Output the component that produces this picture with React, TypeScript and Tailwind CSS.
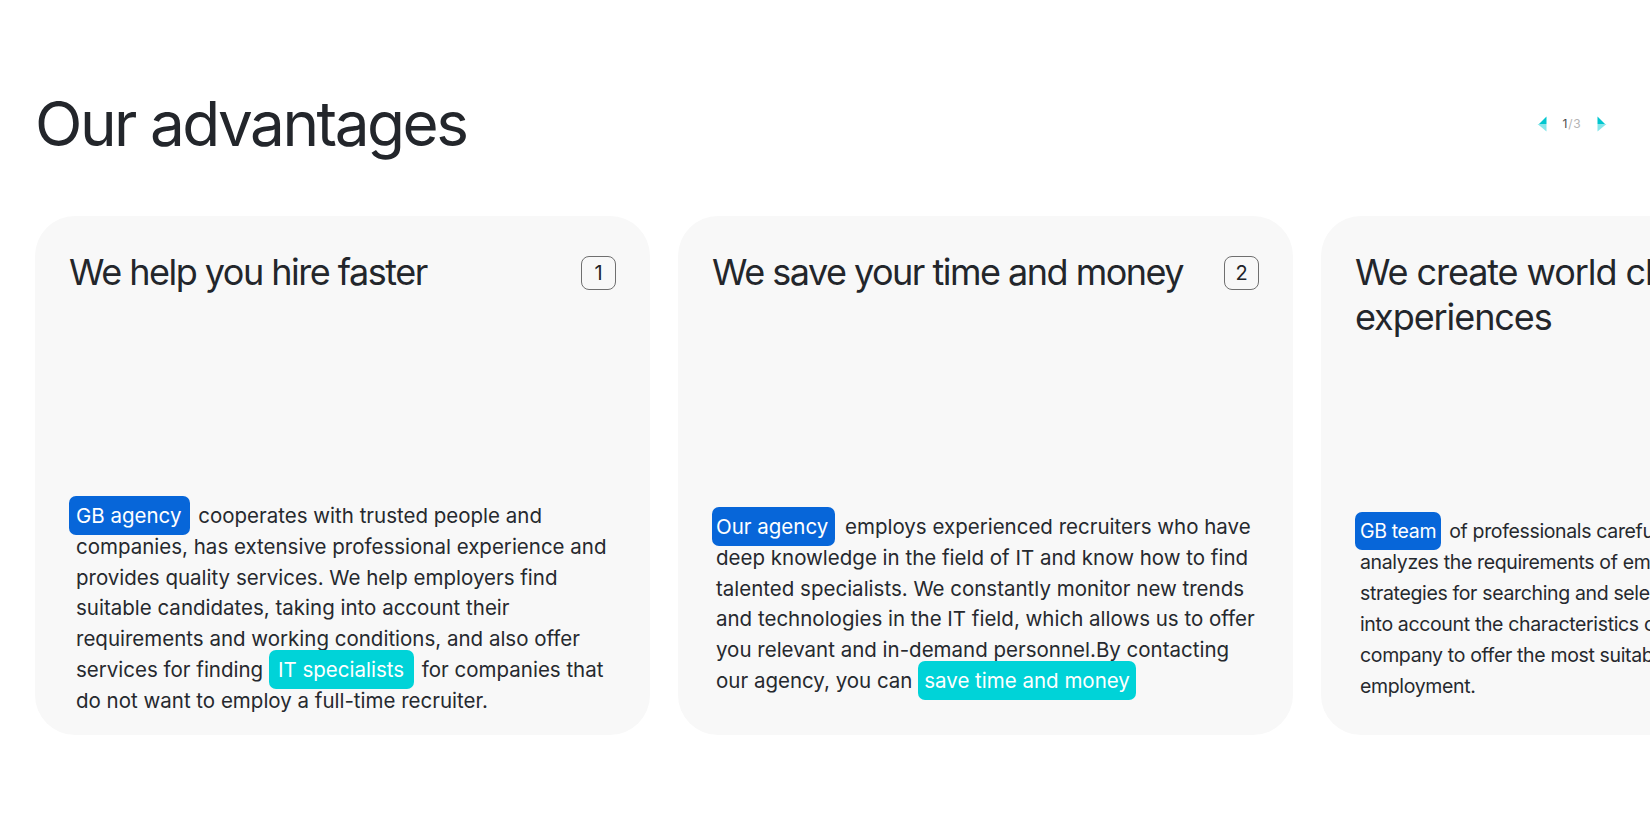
import React from 'react';

function Arrow({ dir }: { dir: 'left' | 'right' }) {
  const flip = dir === 'right';
  return (
    <svg width="10" height="16" viewBox="0 0 10 16" className={flip ? '-scale-x-100' : ''}>
      <polygon points="9.5,0.5 9.5,8 2,8" fill="#00c6cf" />
      <polygon points="0.5,8 9.5,8 9.5,15.5" fill="#86e6ea" />
    </svg>
  );
}

function Badge({ children, tone, className = '' }: { children: React.ReactNode; tone: 'blue' | 'cyan'; className?: string }) {
  return (
    <span
      className={`rounded-[7px] py-[7px] text-white ${tone === 'blue' ? 'bg-[#0766d9]' : 'bg-[#00d3d8]'} ${className}`}
    >
      {children}
    </span>
  );
}

function NumberBox({ n }: { n: number }) {
  return (
    <div className="mt-[6px] flex h-[34px] w-[35px] shrink-0 items-center justify-center rounded-[8px] border-[1.5px] border-[#6f6f6f] text-[20px] text-[#222428]">
      {n}
    </div>
  );
}

export default function App() {
  return (
    <div className="h-[832px] w-[1650px] overflow-hidden bg-white font-['Inter',sans-serif] text-[#23262b]">
      <div className="pl-[35px] pt-[87px]">
        <div className="flex items-center justify-between pr-[43px]">
          <h1 className="text-[62px] leading-[74px] tracking-[-0.04em]">Our advantages</h1>
          <div className="flex items-center gap-[15px]">
            <Arrow dir="left" />
            <span className="w-[20px] text-center text-[12px] leading-none tracking-[0.06em]">
              <span className="text-[#4a4a4a]">1</span>
              <span className="text-[#b4b4b4]">/3</span>
            </span>
            <Arrow dir="right" />
          </div>
        </div>

        <div className="mt-[55px] flex gap-[28px]">
          {/* card 1 */}
          <div className="flex h-[519px] w-[615px] shrink-0 flex-col rounded-[40px] bg-[#f8f8f8] px-[34px] pt-[34px]">
            <div className="flex items-start justify-between gap-[10px]">
              <h3 className="whitespace-nowrap text-[36px] leading-[45px] tracking-[-0.042em]">We help you hire faster</h3>
              <NumberBox n={1} />
            </div>
            <p className="mt-[206px] whitespace-nowrap pl-[7px] text-[20.5px] leading-[30.8px] text-[#26292e]">
              <Badge tone="blue" className="-ml-[7px] mr-[2px] pl-[7px] pr-[9px]">GB agency</Badge> cooperates with trusted people and
              <br />
              companies, has extensive professional experience and
              <br />
              provides quality services. We help employers find
              <br />
              suitable candidates, taking into account their
              <br />
              requirements and working conditions, and also offer
              <br />
              services for finding <Badge tone="cyan" className="mr-[2px] pl-[9px] pr-[10px]">IT specialists</Badge> for companies that
              <br />
              do not want to employ a full-time recruiter.
            </p>
          </div>

          {/* card 2 */}
          <div className="flex h-[519px] w-[615px] shrink-0 flex-col rounded-[40px] bg-[#f8f8f8] px-[34px] pt-[34px]">
            <div className="flex items-start justify-between gap-[10px]">
              <h3 className="whitespace-nowrap text-[36px] leading-[45px] tracking-[-0.042em]">We save your time and money</h3>
              <NumberBox n={2} />
            </div>
            <p className="mt-[217px] whitespace-nowrap pl-[4px] text-[20.5px] leading-[30.8px] text-[#26292e]">
              <Badge tone="blue" className="-ml-[4px] mr-[4px] pl-[4px] pr-[7px]">Our agency</Badge> employs experienced recruiters who have
              <br />
              deep knowledge in the field of IT and know how to find
              <br />
              talented specialists. We constantly monitor new trends
              <br />
              and technologies in the IT field, which allows us to offer
              <br />
              you relevant and in-demand personnel.By contacting
              <br />
              our agency, you can <Badge tone="cyan" className="px-[6px]">save time and money</Badge>
            </p>
          </div>

          {/* card 3 */}
          <div className="flex h-[519px] w-[615px] shrink-0 flex-col rounded-[40px] bg-[#f8f8f8] px-[34px] pt-[34px]">
            <div className="flex items-start justify-between gap-[10px]">
              <h3 className="w-[500px] text-[36px] leading-[45px] tracking-[-0.03em]">We create world class experiences</h3>
              <NumberBox n={3} />
            </div>
            <p className="mt-[176px] whitespace-nowrap pl-[5px] text-[19.5px] leading-[31px] tracking-[-0.018em] text-[#26292e]">
              <Badge tone="blue" className="-ml-[5px] mr-[3px] pl-[5px] pr-[5px]">GB team</Badge> of professionals carefully
              <br />
              analyzes the requirements of employers and develops
              <br />
              strategies for searching and selecting candidates, taking
              <br />
              into account the characteristics of each client's
              <br />
              company to offer the most suitable candidates for
              <br />
              employment.
            </p>
          </div>
        </div>
      </div>
    </div>
  );
}
